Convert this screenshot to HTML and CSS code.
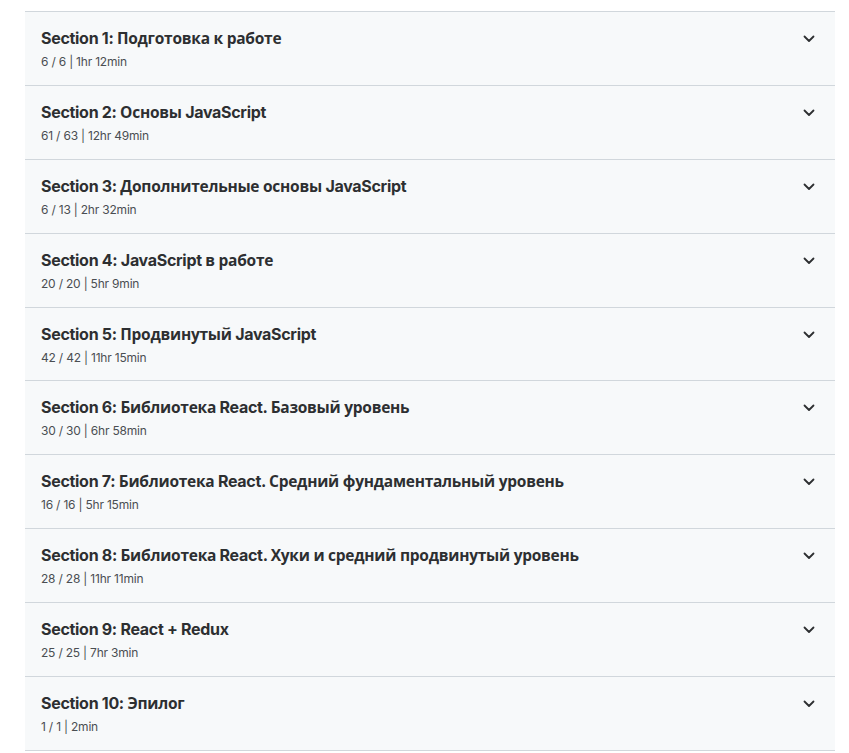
FILE: index.html
```html
<!DOCTYPE html>
<html lang="ru">
<head>
<meta charset="utf-8">
<title>Course content</title>
<link rel="stylesheet" href="styles.css">
</head>
<body>
<div class="list">
  <div class="row"><div class="info"><div class="title">Section 1: <span class="cy">Подготовка к работе</span></div><div class="meta">6 / 6 | 1hr 12min</div></div><svg class="chev" viewBox="0 0 12 8"><path d="M1.5 1.5 L6 6 L10.5 1.5"/></svg></div>
  <div class="row"><div class="info"><div class="title">Section 2: <span class="cy">Основы</span> JavaScript</div><div class="meta">61 / 63 | 12hr 49min</div></div><svg class="chev" viewBox="0 0 12 8"><path d="M1.5 1.5 L6 6 L10.5 1.5"/></svg></div>
  <div class="row"><div class="info"><div class="title">Section 3: <span class="cy">Дополнительные основы</span> JavaScript</div><div class="meta">6 / 13 | 2hr 32min</div></div><svg class="chev" viewBox="0 0 12 8"><path d="M1.5 1.5 L6 6 L10.5 1.5"/></svg></div>
  <div class="row"><div class="info"><div class="title">Section 4: JavaScript <span class="cy">в работе</span></div><div class="meta">20 / 20 | 5hr 9min</div></div><svg class="chev" viewBox="0 0 12 8"><path d="M1.5 1.5 L6 6 L10.5 1.5"/></svg></div>
  <div class="row"><div class="info"><div class="title">Section 5: <span class="cy">Продвинутый</span> JavaScript</div><div class="meta">42 / 42 | 11hr 15min</div></div><svg class="chev" viewBox="0 0 12 8"><path d="M1.5 1.5 L6 6 L10.5 1.5"/></svg></div>
  <div class="row"><div class="info"><div class="title">Section 6: <span class="cy">Библиотека</span> React. <span class="cy">Базовый уровень</span></div><div class="meta">30 / 30 | 6hr 58min</div></div><svg class="chev" viewBox="0 0 12 8"><path d="M1.5 1.5 L6 6 L10.5 1.5"/></svg></div>
  <div class="row"><div class="info"><div class="title">Section 7: <span class="cy">Библиотека</span> React. <span class="cy">Средний фундаментальный уровень</span></div><div class="meta">16 / 16 | 5hr 15min</div></div><svg class="chev" viewBox="0 0 12 8"><path d="M1.5 1.5 L6 6 L10.5 1.5"/></svg></div>
  <div class="row"><div class="info"><div class="title">Section 8: <span class="cy">Библиотека</span> React. <span class="cy">Хуки и средний продвинутый уровень</span></div><div class="meta">28 / 28 | 11hr 11min</div></div><svg class="chev" viewBox="0 0 12 8"><path d="M1.5 1.5 L6 6 L10.5 1.5"/></svg></div>
  <div class="row"><div class="info"><div class="title">Section 9: React + Redux</div><div class="meta">25 / 25 | 7hr 3min</div></div><svg class="chev" viewBox="0 0 12 8"><path d="M1.5 1.5 L6 6 L10.5 1.5"/></svg></div>
  <div class="row"><div class="info"><div class="title">Section 10: <span class="cy">Эпилог</span></div><div class="meta">1 / 1 | 2min</div></div><svg class="chev" viewBox="0 0 12 8"><path d="M1.5 1.5 L6 6 L10.5 1.5"/></svg></div>
</div>
</body>
</html>
```
FILE: styles.css
```css
html, body {
  margin: 0;
  padding: 0;
  background: #ffffff;
}
body {
  font-family: Inter, "Noto Sans", sans-serif;
  color: #2d2f31;
}
.list {
  margin: 11px 14px 0 25px;
  width: 810px;
  border-top: 1px solid #d1d7dc;
}
.row {
  display: flex;
  align-items: flex-start;
  justify-content: space-between;
  background: #f7f9fa;
  border-bottom: 1px solid #d1d7dc;
  box-sizing: border-box;
  padding: 15px 20px 0 16px;
  height: 73.9px;
}
.info {
  display: flex;
  flex-direction: column;
  gap: 5px;
}
.title {
  font-size: 16px;
  font-weight: 700;
  line-height: 22px;
  letter-spacing: -0.3px;
}
.cy {
  font-family: "Open Sans", "Noto Sans", sans-serif;
  font-size: 15.5px;
  letter-spacing: -0.25px;
}
.meta {
  font-size: 12px;
  line-height: 16px;
  color: #4a4e52;
  letter-spacing: -0.2px;
}
.chev {
  width: 12px;
  height: 8px;
  margin-top: 8px;
  fill: none;
  stroke: #2d2f31;
  stroke-width: 1.8;
  stroke-linecap: round;
  stroke-linejoin: round;
}
```
